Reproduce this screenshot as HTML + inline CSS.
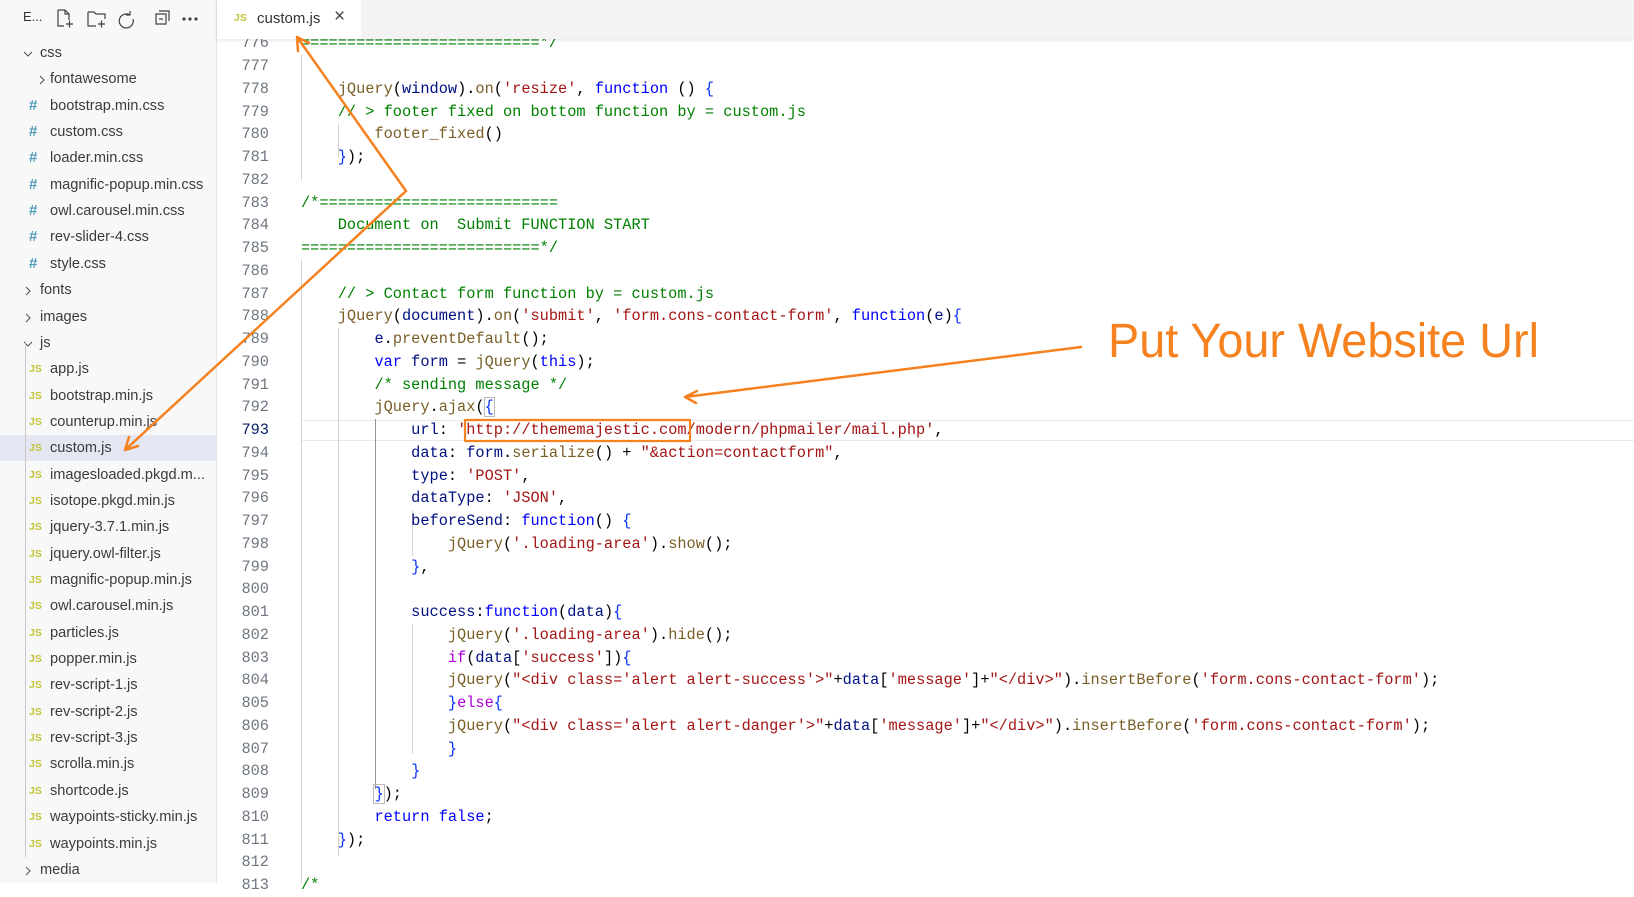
<!DOCTYPE html>
<html><head><meta charset="utf-8">
<style>
*{margin:0;padding:0;box-sizing:border-box}
body{width:1634px;height:883px;overflow:hidden;background:#fff;position:relative;font-family:"Liberation Sans",sans-serif}
#side{position:absolute;left:0;top:0;width:217px;height:883px;background:#f8f8f8;border-right:1px solid #e5e5e5}
.it{position:absolute;left:0;width:216px;height:26px;line-height:26px;font-size:14.6px;color:#3b3b3b;white-space:nowrap}
.it .n{position:absolute;left:50px}
.it .ic{position:absolute;left:29px;font-weight:bold;font-size:13px}
.hash{color:#519aba;font-size:15px!important}
.js{color:#c3c33a;font-size:10.5px!important}
#editor{position:absolute;left:217px;top:39px;right:0;bottom:0;background:#fff}
.ln{position:absolute;left:217px;width:52px;text-align:right;font-family:"Liberation Mono",monospace;font-size:15.3px;color:#6e7681;height:23px;line-height:23px}
.cl{position:absolute;left:301px;font-family:"Liberation Mono",monospace;font-size:15.3px;color:#000;white-space:pre;height:23px;line-height:23px}
.k{color:#0000ff}.s{color:#a31515}.c{color:#008000}.f{color:#795e26}.v{color:#001080}.b{color:#0431fa}.p{color:#af00db}
.g{position:absolute;width:1px;background:#d3d3d3}
</style></head><body>
<div id="side">
 <div style="position:absolute;left:23px;top:9px;font-size:13px;color:#333">E...</div>
 <svg style="position:absolute;left:55px;top:7px" width="150" height="24" viewBox="0 0 150 24" fill="none" stroke="#424242" stroke-width="1.2">
  <path d="M3 3h7l4 4v6M3 3v16h6M10 3v4h4M11 17h7M14.5 13.5v7"/>
  <path d="M33 5h6l2 2h9v5M33 5v14h8M43 17h7M46.5 13.5v7"/>
  <path d="M75 8a7 7 0 1 0 3 4M75 4v4h-4" />
  <path d="M101 7h10v10h-10zM104 4h10v10M104 12h4"/>
  <circle cx="129" cy="12" r="1" fill="#424242"/><circle cx="135" cy="12" r="1" fill="#424242"/><circle cx="141" cy="12" r="1" fill="#424242"/>
 </svg>
</div>
<div id="editor"></div>
<div id="sidelist"></div>
<div id="code"></div>
<script>
var rows=[["c","css",1],["r","fontawesome",2],["h","bootstrap.min.css"],["h","custom.css"],["h","loader.min.css"],["h","magnific-popup.min.css"],["h","owl.carousel.min.css"],["h","rev-slider-4.css"],["h","style.css"],["r","fonts",1],["r","images",1],["c","js",1],["j","app.js"],["j","bootstrap.min.js"],["j","counterup.min.js"],["j","custom.js"],["j","imagesloaded.pkgd.m..."],["j","isotope.pkgd.min.js"],["j","jquery-3.7.1.min.js"],["j","jquery.owl-filter.js"],["j","magnific-popup.min.js"],["j","owl.carousel.min.js"],["j","particles.js"],["j","popper.min.js"],["j","rev-script-1.js"],["j","rev-script-2.js"],["j","rev-script-3.js"],["j","scrolla.min.js"],["j","shortcode.js"],["j","waypoints-sticky.min.js"],["j","waypoints.min.js"],["r","media",1]];
var h="";
rows.forEach(function(r,i){var y=53+i*26.35-13;var bg=i==15?"background:#e4e6f1;":"";
 var s='<div class="it" style="top:'+y+'px;'+bg+'">';
 if(r[0]=="c"||r[0]=="r"){var x=r[2]==2?36:22;var n=r[2]==2?50:40;
  s+='<svg style="position:absolute;left:'+x+'px;top:8px" width="12" height="12" viewBox="0 0 12 12" fill="none" stroke="#555" stroke-width="1.1">'+(r[0]=="c"?'<path d="M2 4l4 4 4-4"/>':'<path d="M4 2l4 4-4 4"/>')+'</svg><span class="n" style="left:'+n+'px">'+r[1]+'</span>';}
 else if(r[0]=="h"){s+='<span class="ic hash">#</span><span class="n">'+r[1]+'</span>';}
 else{s+='<span class="ic js">JS</span><span class="n">'+r[1]+'</span>';}
 h+=s+'</div>';});
h+='<div style="position:absolute;left:25px;top:341px;width:1px;height:516px;background:#c8c8c8"></div>';
document.getElementById("sidelist").innerHTML=h;
var L={
776:'<span class="c">==========================*/</span>',777:'',
778:'    <span class="f">jQuery</span>(<span class="v">window</span>).<span class="f">on</span>(<span class="s">\'resize\'</span>, <span class="k">function</span> () <span class="b">{</span>',
779:'    <span class="c">// &gt; footer fixed on bottom function by = custom.js</span>',
780:'        <span class="f">footer_fixed</span>()',
781:'    <span class="b">}</span>);',782:'',
783:'<span class="c">/*==========================</span>',
784:'<span class="c">    Document on  Submit FUNCTION START</span>',
785:'<span class="c">==========================*/</span>',786:'',
787:'    <span class="c">// &gt; Contact form function by = custom.js</span>',
788:'    <span class="f">jQuery</span>(<span class="v">document</span>).<span class="f">on</span>(<span class="s">\'submit\'</span>, <span class="s">\'form.cons-contact-form\'</span>, <span class="k">function</span>(<span class="v">e</span>)<span class="b">{</span>',
789:'        <span class="v">e</span>.<span class="f">preventDefault</span>();',
790:'        <span class="k">var</span> <span class="v">form</span> = <span class="f">jQuery</span>(<span class="k">this</span>);',
791:'        <span class="c">/* sending message */</span>',
792:'        <span class="f">jQuery</span>.<span class="f">ajax</span>(<span style="outline:1px solid #b9b9b9;color:#0431fa">{</span>',
793:'            <span class="v">url</span>: <span class="s">\'http://thememajestic.com/modern/phpmailer/mail.php\'</span>,',
794:'            <span class="v">data</span>: <span class="v">form</span>.<span class="f">serialize</span>() + <span class="s">"&amp;action=contactform"</span>,',
795:'            <span class="v">type</span>: <span class="s">\'POST\'</span>,',
796:'            <span class="v">dataType</span>: <span class="s">\'JSON\'</span>,',
797:'            <span class="v">beforeSend</span>: <span class="k">function</span>() <span class="b">{</span>',
798:'                <span class="f">jQuery</span>(<span class="s">\'.loading-area\'</span>).<span class="f">show</span>();',
799:'            <span class="b">}</span>,',800:'',
801:'            <span class="v">success</span>:<span class="k">function</span>(<span class="v">data</span>)<span class="b">{</span>',
802:'                <span class="f">jQuery</span>(<span class="s">\'.loading-area\'</span>).<span class="f">hide</span>();',
803:'                <span class="p">if</span>(<span class="v">data</span>[<span class="s">\'success\'</span>])<span class="b">{</span>',
804:'                <span class="f">jQuery</span>(<span class="s">"&lt;div class=\'alert alert-success\'&gt;"</span>+<span class="v">data</span>[<span class="s">\'message\'</span>]+<span class="s">"&lt;/div&gt;"</span>).<span class="f">insertBefore</span>(<span class="s">\'form.cons-contact-form\'</span>);',
805:'                <span class="b">}</span><span class="p">else</span><span class="b">{</span>',
806:'                <span class="f">jQuery</span>(<span class="s">"&lt;div class=\'alert alert-danger\'&gt;"</span>+<span class="v">data</span>[<span class="s">\'message\'</span>]+<span class="s">"&lt;/div&gt;"</span>).<span class="f">insertBefore</span>(<span class="s">\'form.cons-contact-form\'</span>);',
807:'                <span class="b">}</span>',
808:'            <span class="b">}</span>',
809:'        <span style="outline:1px solid #b9b9b9;color:#0431fa">}</span>);',
810:'        <span class="k">return</span> <span class="k">false</span>;',
811:'    <span class="b">}</span>);',812:'',
813:'<span class="c">/*</span>'};
var c='<div style="position:absolute;left:301px;right:0;top:420px;height:21px;border-top:1px solid #eaeaea;border-bottom:1px solid #eaeaea"></div>';
c+='<div class="g" style="left:301px;top:55px;height:125px"></div><div class="g" style="left:301px;top:260px;height:623px"></div>';
c+='<div class="g" style="left:338px;top:124px;height:33px"></div><div class="g" style="left:338px;top:328px;height:528px"></div>';
c+='<div class="g" style="left:375px;top:419px;height:370px;background:#939393"></div>';
c+='<div class="g" style="left:412px;top:510px;height:46px"></div><div class="g" style="left:412px;top:624px;height:130px"></div>';
for(var n=776;n<=813;n++){var y=294+(n-787)*22.75-11.5;
 c+='<div class="ln" style="top:'+y+'px;'+(n==793?'color:#0b216f':'')+'">'+n+'</div>';
 c+='<div class="cl" style="top:'+y+'px">'+L[n]+'</div>';}
document.getElementById("code").innerHTML=c;
</script>
<div style="position:absolute;left:217px;top:0;right:0;height:39px;background:#f3f3f3;z-index:1;box-shadow:0 1px 4px rgba(0,0,0,.12)"></div>
<div style="position:absolute;left:217px;top:0;width:144px;height:39px;background:#fff;z-index:2"><span style="position:absolute;left:17px;top:12px;font-size:10.5px;font-weight:bold;color:#c3c33a">JS</span><span style="position:absolute;left:40px;top:10px;font-size:15px;color:#333">custom.js</span><span style="position:absolute;left:117px;top:6px;font-size:19px;color:#444">×</span></div>
<svg style="position:absolute;left:0;top:0;z-index:5" width="1634" height="883" viewBox="0 0 1634 883" fill="none" stroke="#f5821f" stroke-width="2.5" stroke-linecap="round" stroke-linejoin="round">
 <path d="M406 191L297 37M297 37l1 14M297 37l12 6"/>
 <path d="M406 191L125 450M125 450l13-4M125 450l4-13"/>
 <path d="M1081 347L685 397M685 397l12-6M685 397l11 6"/>
 <rect x="465" y="420" width="225" height="21" stroke-width="2.2"/>
 <text x="1108" y="357" fill="#f5821f" stroke="none" font-family="Liberation Sans, sans-serif" font-size="48" textLength="431" lengthAdjust="spacingAndGlyphs">Put Your Website Url</text>
</svg>
</body></html>
